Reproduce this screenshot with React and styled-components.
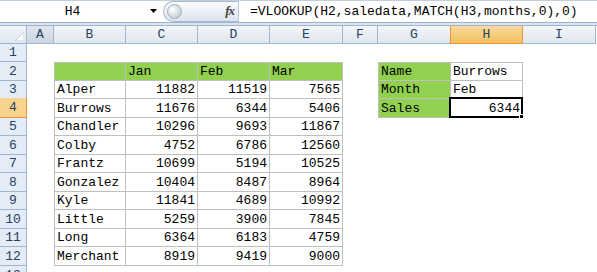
import React from "react";
import styled, { createGlobalStyle, css } from "styled-components";

const Global = createGlobalStyle`
  html, body { margin: 0; padding: 0; background: #fff; }
  body { font-family: "Liberation Mono", "DejaVu Sans Mono", monospace; }
`;

const MONO = `"Liberation Mono", "DejaVu Sans Mono", monospace`;

const Window = styled.div`
  width: 597px;
  height: 272px;
  overflow: hidden;
  background: #fff;
`;

const FormulaBar = styled.div`
  display: flex;
  align-items: stretch;
  height: 21px;
  border-top: 1px solid #c3cedc;
  border-bottom: 1px solid #9fb4cf;
  background: #fff;
`;

const NameBox = styled.div`
  width: 145px;
  display: flex;
  align-items: center;
  justify-content: center;
  font: 13px ${MONO};
  color: #000;
`;

const Drop = styled.div`
  width: 18px;
  display: flex;
  align-items: center;
  justify-content: center;
`;

const Pill = styled.div`
  width: 76px;
  display: flex;
  align-items: center;
  justify-content: space-between;
  padding: 0 4px 0 3px;
  box-sizing: border-box;
  border: 1px solid #a9b8cc;
  border-right: 1px solid #b7c4d6;
  border-radius: 11px 0 0 11px;
  background: linear-gradient(#fbfcfd, #e9eef5 55%, #dde4ee);
`;

const Knob = styled.div`
  width: 13px;
  height: 13px;
  border-radius: 50%;
  border: 1px solid #a4afbd;
  background: radial-gradient(circle at 35% 35%, #ffffff, #d3d9e1 60%, #a8b1bd);
`;

const Fx = styled.span`
  font: italic bold 13px "Liberation Serif", serif;
  color: #444;
  letter-spacing: -1px;
  padding-bottom: 1px;
`;

const Formula = styled.div`
  flex: 1;
  display: flex;
  align-items: center;
  padding-left: 11px;
  font: 13px ${MONO};
  color: #000;
  white-space: nowrap;
`;

const Strip = styled.div`
  height: 2px;
  background: #dbe4f0;
`;

const Sheet = styled.div`
  display: grid;
  grid-template-columns: 27px 27px 72px 72px 72px 73px 35px 73px 72px 73px;
  grid-template-rows: ${(p) => p.$rows};
  border-top: 1px solid #9eb6ce;
`;

const headBase = css`
  box-sizing: border-box;
  display: flex;
  align-items: center;
  justify-content: center;
  font: 13px ${MONO};
  color: #27415f;
  border-right: 1px solid #9eb6ce;
  border-bottom: 1px solid #9eb6ce;
`;

const Corner = styled.div`
  ${headBase};
  position: relative;
  background: linear-gradient(#f3f6fa, #dfe6ef);
  justify-content: flex-end;
  align-items: flex-end;
  padding: 0 2px 2px 0;
`;

const ColHead = styled.div`
  ${headBase};
  background: ${(p) =>
    p.$active
      ? "linear-gradient(#f9d99f, #f1c15f)"
      : p.$dim
      ? "linear-gradient(#e1e6ee, #ccd5e1)"
      : "linear-gradient(#f4f6fa, #dfe6ef)"};
  ${(p) =>
    p.$active &&
    css`
      border: 1px solid #f29436;
      border-top: none;
      margin-left: -1px;
    `}
`;

const RowHead = styled.div`
  ${headBase};
  background: ${(p) => (p.$active ? "#f8d38f" : "#e4ecf7")};
  ${(p) =>
    p.$active &&
    css`
      border-bottom: 1px solid #f29436;
      border-right: 1px solid #f29436;
      margin-top: -1px;
    `}
`;

const Cell = styled.div`
  position: relative;
  box-sizing: border-box;
  display: flex;
  align-items: flex-end;
  justify-content: ${(p) => (p.$right ? "flex-end" : "flex-start")};
  padding: 0 2px 1px 2px;
  font: 13px/15px ${MONO};
  color: #000;
  white-space: nowrap;
  background: ${(p) => (p.$fill ? "#92d050" : "#fff")};
  ${(p) =>
    p.$boxed &&
    css`
      border-right: 1px solid #bfbfbf;
      border-bottom: 1px solid #bfbfbf;
    `}
  ${(p) => p.$first && "border-left: 1px solid #bfbfbf;"}
  ${(p) => p.$top && "border-top: 1px solid #bfbfbf;"}
`;

const ActiveFrame = styled.div`
  position: absolute;
  left: -2px;
  top: -2px;
  right: -1px;
  bottom: -1px;
  border: 2px solid #000;
  pointer-events: none;
`;

const Handle = styled.div`
  position: absolute;
  right: -4px;
  bottom: -4px;
  width: 5px;
  height: 5px;
  background: #000;
  border-left: 1px solid #fff;
  border-top: 1px solid #fff;
`;

const cols = ["A", "B", "C", "D", "E", "F", "G", "H", "I"];

const sales = [
  ["Alper", 11882, 11519, 7565],
  ["Burrows", 11676, 6344, 5406],
  ["Chandler", 10296, 9693, 11867],
  ["Colby", 4752, 6786, 12560],
  ["Frantz", 10699, 5194, 10525],
  ["Gonzalez", 10404, 8487, 8964],
  ["Kyle", 11841, 4689, 10992],
  ["Little", 5259, 3900, 7845],
  ["Long", 6364, 6183, 4759],
  ["Merchant", 8919, 9419, 9000],
];

const lookup = [
  ["Name", "Burrows"],
  ["Month", "Feb"],
  ["Sales", 6344],
];

const heights = [18, 18, 19, 18, 19, 18, 19, 18, 19, 18, 19, 18, 19, 19];

function cellFor(row, col) {
  // main table B2:E12
  if (row >= 2 && row <= 12 && col >= 1 && col <= 4) {
    const base = { boxed: true, first: col === 1, top: row === 2 };
    if (row === 2) {
      return { ...base, fill: true, text: ["", "Jan", "Feb", "Mar"][col - 1] };
    }
    const v = sales[row - 3][col - 1];
    return { ...base, text: v, right: col > 1 };
  }
  // lookup table G2:H4
  if (row >= 2 && row <= 4 && (col === 6 || col === 7)) {
    const v = lookup[row - 2][col - 6];
    return {
      boxed: true,
      first: col === 6,
      top: row === 2,
      fill: col === 6,
      text: v,
      right: typeof v === "number",
      active: row === 4 && col === 7,
    };
  }
  return { text: "" };
}

export default function App() {
  const rows = [];
  for (let r = 1; r <= 13; r++) {
    rows.push(
      <RowHead key={"r" + r} $active={r === 4}>
        {r}
      </RowHead>
    );
    cols.forEach((c, i) => {
      const d = cellFor(r, i);
      rows.push(
        <Cell
          key={c + r}
          $boxed={d.boxed}
          $first={d.first}
          $top={d.top}
          $fill={d.fill}
          $right={d.right}
        >
          {d.text}
          {d.active && (
            <ActiveFrame>
              <Handle />
            </ActiveFrame>
          )}
        </Cell>
      );
    });
  }

  return (
    <Window>
      <Global />
      <FormulaBar>
        <NameBox>H4</NameBox>
        <Drop>
          <svg width="8" height="5" viewBox="0 0 8 5">
            <path d="M0 0h7L3.5 4z" fill="#000" />
          </svg>
        </Drop>
        <Pill>
          <Knob />
          <Fx>fx</Fx>
        </Pill>
        <Formula>=VLOOKUP(H2,saledata,MATCH(H3,months,0),0)</Formula>
      </FormulaBar>
      <Strip />
      <Sheet $rows={heights.map((h) => h + "px").join(" ")}>
        <Corner>
          <svg width="9" height="9" viewBox="0 0 9 9">
            <path d="M9 0v9H0z" fill="#fff" stroke="#b9c6d6" strokeWidth="0.8" />
          </svg>
        </Corner>
        {cols.map((c) => (
          <ColHead key={c} $active={c === "H"} $dim={c === "A"}>
            {c}
          </ColHead>
        ))}
        {rows}
      </Sheet>
    </Window>
  );
}
